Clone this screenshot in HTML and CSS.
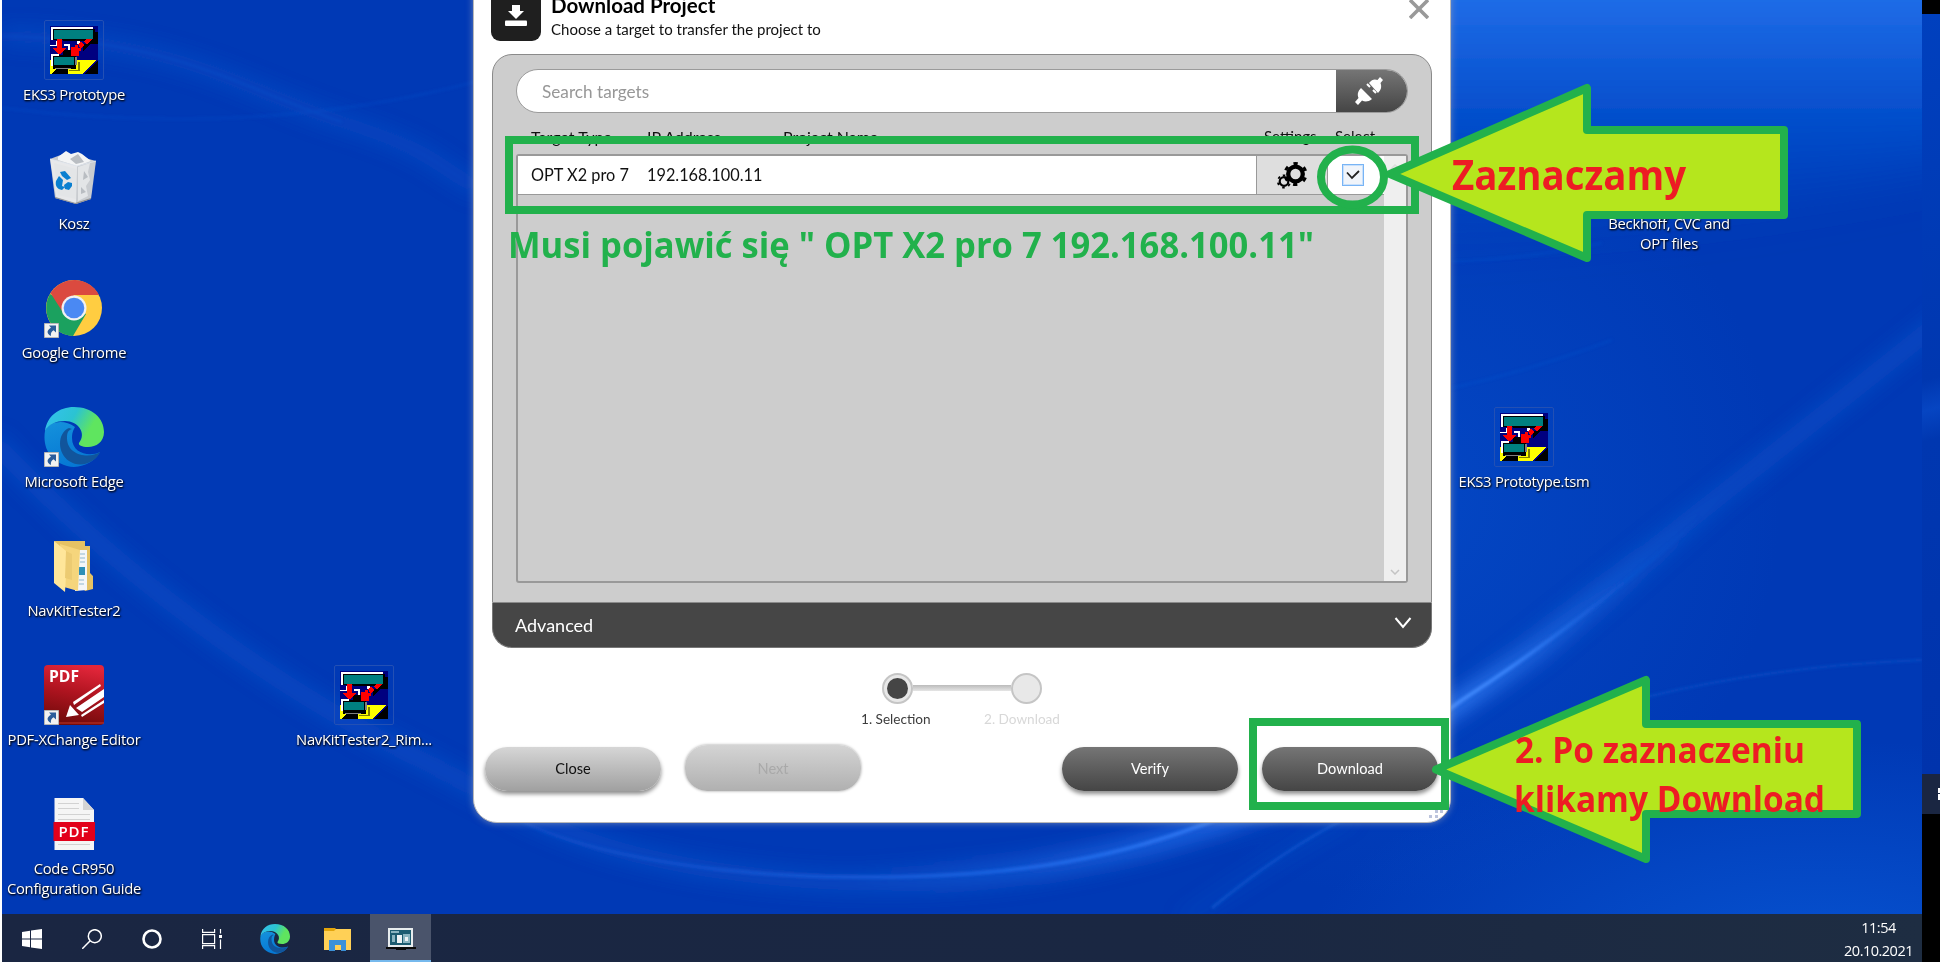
FILE: index.html
```html
<!DOCTYPE html>
<html lang="pl">
<head>
<meta charset="utf-8">
<title>Download Project</title>
<link rel="stylesheet" href="styles.css">
</head>
<body>
<svg class="defs" width="0" height="0">
  <defs>
    <linearGradient id="edgeTop" x1="0" y1="0" x2="1" y2=".4"><stop offset="0" stop-color="#35c1f1"/><stop offset=".5" stop-color="#2bc3d2"/><stop offset=".85" stop-color="#5fe55f"/></linearGradient>
    <linearGradient id="edgeLeft" x1="0" y1="0" x2=".4" y2="1"><stop offset="0" stop-color="#1592dc"/><stop offset="1" stop-color="#0678d4"/></linearGradient>
    <linearGradient id="pdfRed" x1=".6" y1="0" x2=".4" y2="1"><stop offset="0" stop-color="#e2263a"/><stop offset=".45" stop-color="#b01420"/><stop offset="1" stop-color="#6f0a0a"/></linearGradient>
    <symbol id="eks" viewBox="0 0 48 48">
      <g shape-rendering="crispEdges">
        <path fill="#000080" d="M0 0h48v48H0z"/>
        <path fill="#fff" d="M1 1h42v3H3v10H1zM0 19h6v-4h2v5H0zM14 18h6v2h-6zM18 20h2v8h-2zM27 15h3v3h-3z"/>
        <path fill="#000" d="M3 3h42v3h3v12H36v-3H13v-1H3z"/>
        <path fill="#008080" d="M4 4h39v9H4z"/>
        <path fill="#ff0" d="M0 34h46L33 48H0z"/>
        <path fill="#000" d="M48 34v14H34zM2 48l4-5h12v5zM3 29h23v14H3zM13 24h8v6h-8zM33 18l8 0-8 7z"/>
        <path fill="#fff" d="M1 28h8v2H3v10H1z"/>
        <path fill="#008080" d="M4 31h20v8H4z"/>
        <path fill="#808080" d="M25 31h2v8h-2zM5 42h16v1H5z"/>
        <path fill="#808000" d="M28 36h2v9H19v-1h9z"/>
        <path fill="red" d="M7 13h5v9h4l-5 6H8l-5-6h4zM21 21h4v-2h3v3h3v3h-2v5h-8zM28 18l3-3 3 4-3 4zM34 16l2-3h6l-5 5z"/>
      </g>
    </symbol>
    <symbol id="edge" viewBox="0 0 60 60">
      <path fill="url(#edgeLeft)" d="M1 24C-2 42 8 58 30 60c12-1 21-6 26-15-10 5-28 2-28-14 0-7 3-11 3-11C20 12 6 14 1 24z"/>
      <path fill="#11559c" d="M25 21c-12 5-12 25 0 33 12 8 27 1 31-9-10 7-33 4-33-14 0-5 1-8 5-9z"/>
      <path fill="url(#edgeTop)" d="M1 24C3 9 15 0 30 0c18 0 30 11 30 25 0 10-8 15-16 15-6 0-10-2-9-4 8-10-1-22-14-22C12 14 5 17 1 24z"/>
    </symbol>
    <symbol id="shortcut" viewBox="0 0 15 15">
      <path fill="#f2f2f2" stroke="#b5b5b5" d="M.5.5h14v14H.5z"/>
      <path fill="#2b5d9b" d="M5 2.500h7v7L9.600 7.200C7.500 8.500 6.500 10 7 13 1.500 10 3.500 6.500 7 4.700z"/>
    </symbol>
  </defs>
</svg>

<div class="screen">
  <svg class="wallpaper" viewBox="0 0 1920 914" width="1920" height="914">
    <defs>
      <linearGradient id="topGlow" x1="0" y1="0" x2="0" y2="1"><stop offset="0" stop-color="#2a7af2"/><stop offset=".14" stop-color="#2270eb"/><stop offset=".55" stop-color="#0652d0" stop-opacity=".85"/><stop offset="1" stop-color="#0345c2" stop-opacity="0"/></linearGradient>
      <radialGradient id="midGlow"><stop offset="0" stop-color="#0755d3"/><stop offset="1" stop-color="#0755d3" stop-opacity="0"/></radialGradient>
      <linearGradient id="fade" gradientUnits="userSpaceOnUse" x1="500" x2="1700" y1="0" y2="0"><stop offset="0" stop-color="#1b66e6" stop-opacity=".2"/><stop offset=".5" stop-color="#2b78f8" stop-opacity=".7"/><stop offset=".75" stop-color="#4e92ff"/><stop offset=".84" stop-color="#3a84fb"/><stop offset=".93" stop-color="#1560dd" stop-opacity=".3"/><stop offset="1" stop-color="#0f5bdb" stop-opacity="0"/></linearGradient>
      <linearGradient id="haze" gradientUnits="userSpaceOnUse" x1="850" x2="1720" y1="0" y2="0"><stop offset="0" stop-color="#2b78f8" stop-opacity="0"/><stop offset=".4" stop-color="#2b78f8" stop-opacity=".7"/><stop offset=".7" stop-color="#3d88ff" stop-opacity=".8"/><stop offset="1" stop-color="#1c69e6" stop-opacity="0"/></linearGradient>
      <filter id="b1" x="-10%" y="-30%" width="120%" height="160%"><feGaussianBlur stdDeviation="1.500"/></filter>
      <filter id="b2" x="-10%" y="-30%" width="120%" height="160%"><feGaussianBlur stdDeviation="10"/></filter>
      <filter id="b3" x="-10%" y="-50%" width="120%" height="200%"><feGaussianBlur stdDeviation="25"/></filter>
    </defs>
    <path fill="#0039b5" d="M0 0h1920v914H0z"/>
    <ellipse cx="1400" cy="500" rx="380" ry="400" fill="url(#midGlow)" opacity=".5"/>
    <ellipse cx="1820" cy="960" rx="520" ry="220" fill="url(#midGlow)" opacity=".9"/>
    <path fill="url(#topGlow)" filter="url(#b3)" d="M900-60H2100V130C1800 200 1600 250 900 260z"/>
    <g fill="none" stroke="#1666dd">
      <g filter="url(#b2)">
        <path stroke-width="16" opacity=".32" d="M0 36C180 40 240 90 340 122S430 165 480 190"/>
        <path stroke-width="18" opacity=".38" d="M-10 440C120 580 280 690 400 750S560 845 700 868S1000 890 1160 845S1400 750 1460 700S1740 480 1950 312"/>
        <path stroke="url(#haze)" stroke-width="17" d="M850 876C1060 875 1180 840 1300 790C1400 745 1455 705 1530 655Q1600 600 1720 500"/>
        <path stroke-width="8" opacity=".3" d="M1180 920Q1260 865 1350 815"/>
      </g>
      <g filter="url(#b1)">
        <path stroke-width="2" opacity=".22" d="M0 36C180 40 240 90 340 122M0 108C180 130 340 118 480 80M1450 262Q1530 258 1600 243M1450 388Q1530 370 1610 340"/>
        <path stroke="url(#fade)" stroke-width="3.500" d="M500 810C560 850 700 876 850 877S1100 862 1200 825S1400 745 1460 700Q1530 655 1600 600T1700 516"/>
        <path stroke-width="3" opacity=".5" d="M1210 908Q1280 850 1350 815"/>
        <path stroke-width="2" opacity=".4" d="M1640 698Q1770 666 1920 660"/>
      </g>
    </g>
  </svg>

  <div class="desktop">
    <div class="item c1 r1"><span class="pic framed"><svg width="48" height="48"><use href="#eks"/></svg></span><span class="name">EKS3 Prototype</span></div>
    <div class="item c1 r2"><span class="pic"><svg width="60" height="60" viewBox="0 0 60 60">
      <path fill="#c9ccd0" d="M6 10 22 4l30 8-5 38-15 5-21-6z"/>
      <path fill="#fff" fill-opacity=".55" d="m6 10 27 7-1 37-20-6z"/>
      <path fill="#f3f4f5" d="m14 8 8-6 5 3 7-2 4 2 9 7-14 5-19-6z"/>
      <path fill="#e3e5e7" d="m10 14 22 6v30l-18-4zM34 18l12-4-2 9 2 8-4 6 2 10-10 5z"/>
      <path fill="#b9bdc2" d="m26 10 6 5 8-2-6-8zM40 22l4 6-5 3zM37 38l5 5-5 2z"/>
      <path fill="none" stroke="#dfe6ef" stroke-width=".8" d="m6 10 27 7 19-5"/>
      <path fill="#8f8f8f" d="m11 48 20 6 16-5v1l-15 5-21-6z"/>
      <path fill="#0a7fd0" d="m16 23 5-1 6 7-4 2-5-4zM12 32l3-5 4 4-1 6 3 1-3 3c-5-1-7-4-6-9zM20 36l4-3 4 1v3l-3 4-4-1z"/></svg></span><span class="name">Kosz</span></div>
    <div class="item c1 r3"><span class="pic"><svg width="60" height="60" viewBox="0 0 60 60">
      <circle cx="30" cy="30" r="28" fill="#ffcd41"/>
      <path fill="#1ba15f" d="M6 16A28 28 0 0 0 29 58L42 36 30 30z"/>
      <path fill="#db4a3f" d="M6.500 15A28 28 0 0 1 55 17H30L18 33z"/>
      <circle cx="30" cy="30" r="12.500" fill="#f1f1f1"/><circle cx="30" cy="30" r="10.300" fill="#4a89f3"/>
      <use href="#shortcut" x="0" y="45" width="15" height="15"/></svg></span><span class="name">Google Chrome</span></div>
    <div class="item c1 r4"><span class="pic"><svg width="60" height="60"><use href="#edge"/><use href="#shortcut" x="0" y="45" width="15" height="15"/></svg></span><span class="name">Microsoft Edge</span></div>
    <div class="item c1 r5"><span class="pic"><svg width="60" height="60" viewBox="0 0 60 60">
      <path fill="#e5c264" d="M10 5h31v5h5v27l3 3v13l-8 2z"/>
      <path fill="#f4f6f8" d="M32 14h11v40l-12 1z"/>
      <path stroke="#8fb8d0" d="M36 18h5M36 22h5M36 26h5M35 44h5M35 48h5"/><path fill="#2d8fb8" d="M35 31h6v8h-6z"/>
      <path fill="#f5d57c" d="m16 8 20 6-2 41-14-4z"/>
      <path fill="#ffe69a" d="m10 5 12 10v25l-1 16-11-9z"/><path fill="#eccb72" d="m22 15 6 3v26l-7-2z"/></svg></span><span class="name">NavKitTester2</span></div>
    <div class="item c1 r6"><span class="pic"><svg width="60" height="60" viewBox="0 0 60 60">
      <rect width="60" height="60" rx="4" fill="url(#pdfRed)"/>
      <text class="pdf-mark" x="5" y="16.500" textLength="30" lengthAdjust="spacingAndGlyphs">PDF</text>
      <path fill="#fff" d="m26 40 9 10-13 2zM32 43 60 24v8L38 47zM29 37l27-18 1 2-27 19zM37 50l23-15v3L38 52z"/>
      <path fill="none" stroke="#c0392b" d="M14 58h46"/>
      <use href="#shortcut" x="0" y="45" width="15" height="15"/></svg></span><span class="name">PDF-XChange Editor</span></div>
    <div class="item c1 r7"><span class="pic"><svg width="60" height="60" viewBox="0 0 60 60">
      <path fill="#f5f5f5" d="M10.500 4H39l11 12v40H10.500z"/><path fill="#d4d4d4" d="M39 4v12h11z"/>
      <path stroke="#d2d2d2" d="M14 9.500h21M14 14.500h21M14 20.500h32M14 25.500h32M14 50.500h32"/>
      <path fill="#e2001a" d="M9.500 28H51v19H9.500z"/>
      <text class="pdf-label" x="14.500" y="43" textLength="30">PDF</text></svg></span><span class="name">Code CR950<br>Configuration Guide</span></div>
    <div class="item c3 r6"><span class="pic framed"><svg width="48" height="48"><use href="#eks"/></svg></span><span class="name">NavKitTester2_Rim...</span></div>
    <div class="item c11 r4"><span class="pic framed"><svg width="48" height="48"><use href="#eks"/></svg></span><span class="name">EKS3 Prototype.tsm</span></div>
    <div class="item c12 r2"><span class="pic"></span><span class="name">Beckhoff, CVC and<br>OPT files</span></div>
  </div>

  <div class="taskbar">
    <span class="task"><svg width="20" height="20" viewBox="0 0 20 20"><path fill="#fff" d="m0 3 8-1.200V9.500H0zM9 1.600 20 0v9.500H9zM0 10.500h8v7.800L0 17zM9 10.500h11V20L9 18.400z"/></svg></span>
    <span class="task"><svg width="20" height="20" viewBox="0 0 20 20" fill="none" stroke="#fff" stroke-width="1.500"><circle cx="12.800" cy="7.200" r="6.500"/><path d="m8.200 11.800-8 8"/></svg></span>
    <span class="task"><svg width="20" height="20" viewBox="0 0 20 20"><circle cx="10" cy="10" r="8.500" fill="none" stroke="#fff" stroke-width="2.600"/></svg></span>
    <span class="task"><svg width="20" height="20" viewBox="0 0 20 20" fill="none" stroke="#fff" stroke-width="1.200"><path d="M.6 0v3.400h12V0M.6 5.600h12v9H.6zM.6 20v-3.400h12V20M18.500 0v4.500M18.500 10.500V20"/><path fill="#fff" stroke="none" d="M17 6h3v3h-3z"/></svg></span>
    <span class="task task-edge"><svg width="30" height="30"><use href="#edge"/></svg></span>
    <span class="task task-files"><svg width="27" height="24" viewBox="0 0 27 24"><path fill="#e3a50b" d="M0 1h11l2 2v3H0z"/><path fill="#ffd056" d="M0 4h10l2-2h15v21H0z"/><path fill="#3b91d8" d="M5 24V13h17v11h-5v-6h-6v6z"/></svg></span>
    <span class="task active"><svg width="30" height="24" viewBox="0 0 30 24"><path fill="#e7ecee" d="M2 1h25v19H2z"/><path fill="#1c5c70" d="M4 3h21v15H4z"/><path fill="#8bb5c0" d="M5 4h8v2H5zM6 8h3v7H6zM17 7h7v9h-7z"/><path fill="#eef3f4" d="M11 8h5v8h-5zM19 10h3v4h-3z"/><path fill="#0b0b0b" d="M0 20h30v2H20v1H10v-1H0z"/></svg></span>
    <div class="clock"><span class="time">11:54</span><span class="date">20.10.2021</span></div>
  </div>

  <div class="dialog">
    <div class="head">
      <span class="head-icon"><svg width="22" height="22" viewBox="0 0 22 22"><path fill="#fff" d="M7 0h8v6h4l-8 8-8-8h4z"/><rect y="15.500" width="22" height="5.500" rx="1" fill="#fff"/></svg></span>
      <div class="head-text"><div class="title">Download Project</div><div class="subtitle">Choose a target to transfer the project to</div></div>
      <svg class="close" width="20" height="20" viewBox="0 0 20 20"><path stroke="#999" stroke-width="3.600" d="m1 1 18 18M19 1 1 19"/></svg>
    </div>
    <div class="panel">
      <div class="search">
        <span class="hint">Search targets</span>
        <span class="connect"><svg width="28" height="28" viewBox="0 0 28 28" fill="#fff"><path d="m0 25 3.500-4C2 17 3 14 6 11l11 11c-4 3-7 3-10 1.500L3 28zM14 6c3-4 6-4 8.500-3L25 0l3 3-2.500 3C27 10 26 13 23 16z"/><path stroke="#fff" stroke-width="2" d="m15 10-3-3M21 16l-3-3"/></svg></span>
      </div>
      <div class="columns"><span class="col-type">Target Type</span><span class="col-ip">IP Address</span><span class="col-name">Project Name</span><span class="col-set">Settings</span><span class="col-sel">Select</span></div>
      <div class="list">
        <div class="rows">
          <div class="row">
            <span class="cell-type">OPT X2 pro 7</span><span class="cell-ip">192.168.100.11</span>
            <span class="cell-set"><svg width="30" height="28" viewBox="0 0 30 28"><g fill="none" stroke="#000"><circle cx="18.500" cy="13" r="7.300" stroke-width="4.300"/><circle cx="18.500" cy="13" r="10.500" stroke-width="3" stroke-dasharray="4.200 6.796" transform="rotate(-101 18.500 13)"/><circle cx="7" cy="20.500" r="4.300" stroke-width="2.200"/><circle cx="7" cy="20.500" r="6.200" stroke-width="1.800" stroke-dasharray="2.500 3.993" transform="rotate(-101 7 20.500)"/></g></svg></span>
            <span class="cell-sel"><span class="box"><svg width="14" height="10" viewBox="0 0 14 10"><path fill="none" stroke="#222" stroke-width="1.800" d="m1 2.500 5 5.500 7-7"/></svg></span></span>
          </div>
        </div>
        <div class="scroll"><svg width="10" height="6" viewBox="0 0 10 6"><path fill="none" stroke="#ddd" stroke-width="1.500" d="m1 5 4-4 4 4"/></svg><svg width="10" height="6" viewBox="0 0 10 6"><path fill="none" stroke="#c4c4c4" stroke-width="1.500" d="m1 1 4 4 4-4"/></svg></div>
      </div>
    </div>
    <div class="advanced"><span class="advanced-text">Advanced</span><svg width="18" height="12" viewBox="0 0 18 12"><path fill="none" stroke="#fff" stroke-width="2" d="m1.500 1 7.500 9 7.500-9"/></svg></div>
    <div class="steps">
      <div class="track"><span class="dot on"></span><span class="line"></span><span class="dot"></span></div>
      <div class="captions"><span class="cap-one">1. Selection</span><span class="cap-two">2. Download</span></div>
    </div>
    <div class="buttons">
      <span class="btn light">Close</span><span class="btn off">Next</span><span class="spacer"></span><span class="btn dark">Verify</span><span class="btn dark">Download</span>
    </div>
    <svg class="grip" width="16" height="14" viewBox="0 0 16 14" fill="#bcc4dc"><path d="M8 1h3v3H8zM13 1h3v3h-3zM2 6h3v3H2zM8 6h3v3H8z"/></svg>
  </div>
</div>

<div class="side">
  <span class="side-top"></span><span class="side-blue"></span><span class="side-bar"><i class="side-start"></i></span><span class="side-rest"></span>
</div>

<svg class="notes" width="1940" height="962" viewBox="0 0 1940 962">
  <g fill="none" stroke="#22b14c" stroke-width="8">
    <rect x="509" y="140" width="906" height="70"/>
    <ellipse cx="1352.500" cy="177" rx="31.500" ry="27.500"/>
    <rect x="1253" y="722" width="192" height="84"/>
  </g>
  <g fill="#b5e61d" stroke="#22b14c" stroke-width="8" stroke-linejoin="round">
    <path d="M1390 174 1587 88v42h197v85h-197v43z"/>
    <path d="M1436 769.500 1646 680v44h211v90h-211v45z"/>
  </g>
  <text class="note green" x="508" y="258" textLength="806" lengthAdjust="spacingAndGlyphs">Musi pojawić się " OPT X2 pro 7 192.168.100.11"</text>
  <text class="note big" x="1452" y="190" textLength="234" lengthAdjust="spacingAndGlyphs">Zaznaczamy</text>
  <text class="note" x="1515" y="763" textLength="290" lengthAdjust="spacingAndGlyphs">2. Po zaznaczeniu</text>
  <text class="note" x="1514" y="812" textLength="311" lengthAdjust="spacingAndGlyphs">klikamy Download</text>
</svg>
</body>
</html>
```

FILE: styles.css
```css
* { box-sizing: border-box; }
body { margin: 0; width: 1940px; height: 962px; overflow: hidden; display: flex; background: #fff; position: relative; font-family: Lato, "Open Sans", sans-serif; }
.defs { position: absolute; }
svg { display: block; flex: none; }

.screen { position: relative; margin-left: 2px; width: 1920px; height: 962px; overflow: hidden; display: flex; flex-direction: column; }
.wallpaper { position: absolute; left: 0; top: 0; }

/* desktop icons */
.desktop { position: relative; height: 914px; padding-top: 20px; display: grid; grid-template-columns: repeat(13, 145px); grid-template-rows: repeat(7, 129px); font-family: "Open Sans", "Noto Sans", sans-serif; }
.item { display: flex; flex-direction: column; align-items: center; gap: 4px; width: 144px; }
.c1 { grid-column: 1; } .c3 { grid-column: 3; } .c11 { grid-column: 11; } .c12 { grid-column: 12; }
.r1 { grid-row: 1; } .r2 { grid-row: 2; } .r3 { grid-row: 3; } .r4 { grid-row: 4; } .r5 { grid-row: 5; } .r6 { grid-row: 6; } .r7 { grid-row: 7; }
.pic { width: 60px; height: 60px; display: flex; align-items: center; justify-content: center; flex: none; }
.framed { border: 1px solid #2350b4; border-radius: 2px; }
.name { color: #fff; font-size: 14.8px; line-height: 20px; letter-spacing: -.26px; text-align: center; white-space: nowrap; text-shadow: 1px 1px 2px #000, 0 1px 2px rgba(0,0,0,.7); }
.pdf-mark { font: bold 16px "Open Sans", sans-serif; fill: #fff; }
.pdf-label { font: 600 15px "Open Sans", sans-serif; fill: #fff; }

/* taskbar */
.taskbar { position: relative; height: 48px; background: linear-gradient(90deg, #1a2642, #1a2742 60%, #1e2d42); display: flex; color: #fff; }
.task { width: 60px; height: 48px; padding-top: 2px; display: flex; align-items: center; justify-content: center; }
.task-edge { width: 68px; padding-right: 2px; }
.task-files { padding-right: 5px; }
.active { width: 61px; background: #4a546b; border-bottom: 2px solid #76b9ed; padding-top: 4px; }
.clock { margin-left: auto; padding: 2px 9px 0 0; display: flex; flex-direction: column; font: 14.5px/23px "Open Sans", sans-serif; letter-spacing: -.5px; text-align: center; }

/* dialog window */
.dialog { position: absolute; left: 471px; top: -30px; width: 978px; height: 853px; background: #fff; border: 1px solid #b9b9b9; border-radius: 24px; box-shadow: 0 0 7px rgba(150,160,190,.7); padding: 20px 18px 0; color: #111; }
.head { display: flex; height: 63px; }
.head-icon { width: 50px; height: 50px; margin-left: -1px; background: #1f1f1f; border-radius: 9px; display: flex; justify-content: center; padding-top: 14px; }
.head-text { padding: 2px 0 0 10px; flex: 1; }
.title { font-size: 20.5px; line-height: 24px; font-weight: 700; color: #000; white-space: nowrap; }
.subtitle { font-size: 15px; line-height: 25px; }
.close { margin: 8px 3px 0 0; }
.panel { height: 549px; background: #cdcdcd; border: 1px solid #8a8a8a; border-radius: 20px 20px 0 0; padding: 14px 23px 0; }
.search { height: 44px; border: 1px solid #9b9b9b; border-radius: 22px; background: #fff; display: flex; overflow: hidden; }
.hint { flex: 1; padding-left: 25px; font-size: 17.2px; line-height: 43px; color: #979797; }
.connect { width: 71px; background: linear-gradient(#757575, #454545); display: flex; align-items: center; justify-content: center; padding-right: 5px; }
.columns { height: 41px; display: flex; font-size: 16px; line-height: 47px; padding-left: 15px; white-space: nowrap; }
.col-type { width: 116px; } .col-ip { width: 136px; } .col-name { width: 481px; } .col-set { width: 71px; } .col-set, .col-sel { font-size: 15px; }
.list { height: 429px; border: 2px solid #999; border-radius: 3px; display: flex; }
.rows { flex: 1; }
.row { height: 39px; background: #fff; border-bottom: 1px solid #999; display: flex; font-size: 16.3px; line-height: 38px; padding-left: 13px; white-space: nowrap; }
.cell-type { width: 116px; } .cell-ip { flex: 1; }
.cell-set { width: 72px; background: #dedede; border-left: 1px solid #999; border-right: 1px solid #999; display: flex; align-items: center; justify-content: center; }
.cell-sel { width: 56px; display: flex; align-items: center; padding-left: 14px; }
.box { width: 22px; height: 22px; border: 1px solid #78b4f5; box-shadow: inset 0 0 0 1px #c8e0fb; background: #f0f4fa; display: flex; align-items: center; justify-content: center; margin-top: -1px; }
.scroll { width: 22px; background: #efefef; display: flex; flex-direction: column; justify-content: space-between; align-items: center; padding: 8px 0 6px; }
.advanced { height: 45px; background: #464646; border: 1px solid #777; border-top: 0; border-radius: 0 0 20px 20px; display: flex; justify-content: space-between; align-items: flex-start; padding: 14px 19px 0 22px; }
.advanced-text { color: #fff; font-size: 18px; line-height: 17px; }
.steps { height: 97px; padding: 24px 0 0 390px; }
.track { display: flex; align-items: center; height: 32px; }
.dot { width: 31px; height: 31px; border-radius: 50%; background: #e8e8e8; border: 2px solid #c5c5c5; display: flex; align-items: center; justify-content: center; }
.on::after { content: ""; width: 21px; height: 21px; border-radius: 50%; background: #454545; }
.line { width: 98px; height: 6px; background: linear-gradient(#bbb, #e5e5e5); }
.captions { display: flex; margin-left: -21px; padding-top: 6px; font-size: 13.6px; line-height: 18px; white-space: nowrap; }
.cap-one { width: 123px; color: #3d3d3d; } .cap-two { color: #d8d8d8; }
.buttons { display: flex; height: 50px; margin: 0 -6px 0 -7px; gap: 24px; }
.spacer { flex: 1; margin-right: -24px; }
.btn { width: 176px; height: 44px; margin-top: 2px; border-radius: 22px; text-align: center; font-size: 14.6px; line-height: 43px; box-shadow: 0 3px 4px rgba(0,0,0,.45); }
.light { background: linear-gradient(#d6d6d6, #a0a0a0); }
.off { background: linear-gradient(#d4d4d4, #b0b0b0); color: #a9a9a9; box-shadow: 0 0 3px #999; margin-top: 0; height: 46px; line-height: 47px; }
.dark { background: linear-gradient(#757575, #454545); color: #fff; }
.grip { position: absolute; right: 7px; bottom: -1px; }

/* strip of the neighbouring monitor */
.side { width: 18px; display: flex; flex-direction: column; background: #000; }
.side-top { height: 14px; }
.side-blue { height: 760px; background: linear-gradient(165deg, #0040be, #003ab5 30%, #0037b0 48%, #0645c2 52%, #0037b0 56%, #0033ac); }
.side-bar { height: 40px; background: #1a2642; padding: 14px 0 0 16px; }
.side-start { display: block; width: 2px; height: 12px; background: linear-gradient(#fff 5px, #1a2642 5px 6px, #fff 6px); }

/* annotations drawn over everything */
.notes { position: absolute; left: 0; top: 0; }
.note { font: bold 35px "Open Sans", sans-serif; fill: #ed1c24; }
.green { fill: #22b14c; }
.big { font-size: 41.5px; }
```
